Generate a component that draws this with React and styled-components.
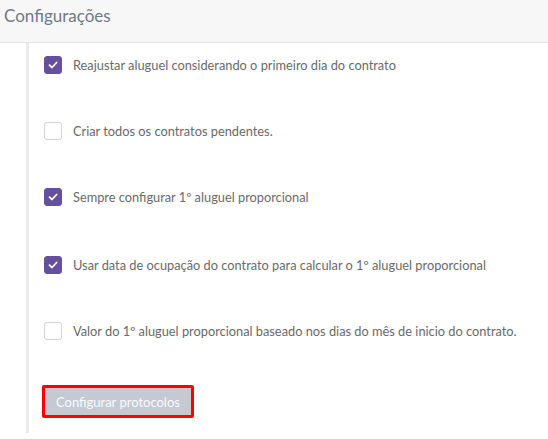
import React from 'react';
import styled, { createGlobalStyle } from 'styled-components';

const GlobalStyle = createGlobalStyle`
    * {
        margin: 0;
        padding: 0;
        box-sizing: border-box;
    }
    body {
        background: #ffffff;
        font-family: Lato, "Noto Sans", sans-serif;
    }
`;

const Header = styled.header`
    height: 43px;
    background-color: #f7f7f7;
    border-bottom: 1px solid #e3e3e3;
    display: flex;
    align-items: center;
    padding: 0 4px 11px;

    h1 {
        font-size: 17px;
        font-weight: 400;
        color: #6f7a86;
    }
`;

const Body = styled.div`
    padding-left: 26px;
    padding-bottom: 7px;
`;

const Panel = styled.section`
    border-left: 3px solid #ebebeb;
    padding: 13px 0 15px 15px;
    display: flex;
    flex-direction: column;
`;

const Row = styled.label`
    display: flex;
    align-items: center;
    gap: 11px;
    height: 18px;
    margin-bottom: ${p => p.$space}px;
    font-size: 12.8px;
    color: #6a6a6a;
    cursor: pointer;
`;

const Box = styled.span`
    width: 18px;
    height: 18px;
    flex: none;
    border-radius: 3px;
    display: flex;
    align-items: center;
    justify-content: center;
    background: ${p => (p.$checked ? '#664f9f' : '#ffffff')};
    border: 1px solid ${p => (p.$checked ? '#664f9f' : '#d3d3d3')};
`;

const Button = styled.button`
    align-self: flex-start;
    margin-left: -2px;
    height: 33px;
    padding: 0 11px;
    border: 3px solid #ff0000;
    border-radius: 2px;
    background: #c5c9d4;
    color: #fafafc;
    font-family: Lato, "Noto Sans", sans-serif;
    font-size: 13px;
    cursor: pointer;
`;

const options = [
    { text: 'Reajustar aluguel considerando o primeiro dia do contrato', checked: true, space: 48 },
    { text: 'Criar todos os contratos pendentes.', checked: false, space: 48 },
    { text: 'Sempre configurar 1º aluguel proporcional', checked: true, space: 50 },
    { text: 'Usar data de ocupação do contrato para calcular o 1º aluguel proporcional', checked: true, space: 48 },
    { text: 'Valor do 1º aluguel proporcional baseado nos dias do mês de inicio do contrato.', checked: false, space: 45 },
];

function Check() {
    return (
        <svg width="10" height="8" viewBox="0 0 10 8">
            <path d="M1.5 4.2 L4 6.5 L8.6 1.5" fill="none" stroke="#fff" strokeWidth="1.8" strokeLinecap="round" strokeLinejoin="round" />
        </svg>
    );
}

export default function App() {
    return (
        <>
            <GlobalStyle />
            <Header>
                <h1>Configurações</h1>
            </Header>
            <Body>
                <Panel>
                    {options.map(o => (
                        <Row key={o.text} $space={o.space}>
                            <Box $checked={o.checked}>{o.checked && <Check />}</Box>
                            {o.text}
                        </Row>
                    ))}
                    <Button>Configurar protocolos</Button>
                </Panel>
            </Body>
        </>
    );
}
